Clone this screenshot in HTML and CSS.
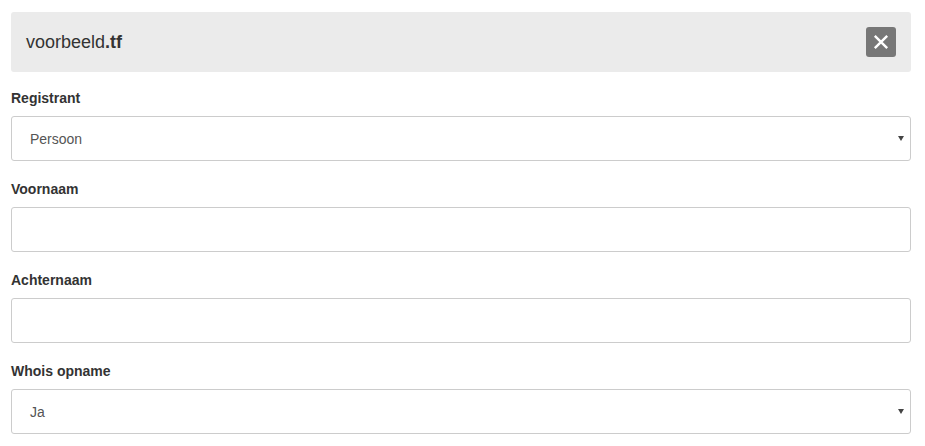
FILE: index.html
```html
<!DOCTYPE html>
<html lang="nl">
<head>
<meta charset="utf-8">
<title>voorbeeld.tf</title>
<link rel="stylesheet" href="styles.css">
</head>
<body>
<div class="page">
  <div class="domain-bar">
    <div class="domain-name">voorbeeld<strong>.tf</strong></div>
    <button class="close-btn" type="button" aria-label="Sluiten">
      <svg width="16" height="16" viewBox="0 0 16 16"><path d="M1.8 1.8 L14.2 14.2 M14.2 1.8 L1.8 14.2" stroke="#fff" stroke-width="2.4" stroke-linecap="butt"/></svg>
    </button>
  </div>
  <form class="form">
    <div class="group">
      <label class="label">Registrant</label>
      <div class="control select"><span class="value">Persoon</span><span class="caret"></span></div>
    </div>
    <div class="group">
      <label class="label">Voornaam</label>
      <div class="control"></div>
    </div>
    <div class="group">
      <label class="label">Achternaam</label>
      <div class="control"></div>
    </div>
    <div class="group">
      <label class="label">Whois opname</label>
      <div class="control select"><span class="value">Ja</span><span class="caret"></span></div>
    </div>
  </form>
</div>
</body>
</html>
```
FILE: styles.css
```css
* { box-sizing: border-box; }
html, body { margin: 0; padding: 0; background: #fff; }
body {
  font-family: "Liberation Sans", Arial, sans-serif;
  font-size: 14px;
  line-height: 20px;
  color: #333;
}
.page {
  padding: 12px 14px 0 11px;
}
.domain-bar {
  height: 60px;
  background: #ebebeb;
  border-radius: 3px;
  display: flex;
  align-items: center;
  justify-content: space-between;
  padding: 0 15px 0 15px;
}
.domain-name {
  font-size: 18px;
  color: #333;
  line-height: 24px;
}
.domain-name strong { font-weight: bold; }
.close-btn {
  width: 30px;
  height: 30px;
  border: 0;
  border-radius: 3px;
  background: #777;
  display: flex;
  align-items: center;
  justify-content: center;
  padding: 0;
}
.form {
  padding-top: 16px;
}
.group {
  margin-bottom: 18px;
}
.label {
  display: block;
  font-weight: bold;
  margin-bottom: 8px;
}
.control {
  height: 45px;
  border: 1px solid #ccc;
  border-radius: 3px;
  display: flex;
  align-items: center;
  padding: 0 6px 0 18px;
  color: #555;
}
.select { justify-content: space-between; }
.caret {
  width: 0;
  height: 0;
  border-left: 3px solid transparent;
  border-right: 3px solid transparent;
  border-top: 5px solid #444;
}
```
